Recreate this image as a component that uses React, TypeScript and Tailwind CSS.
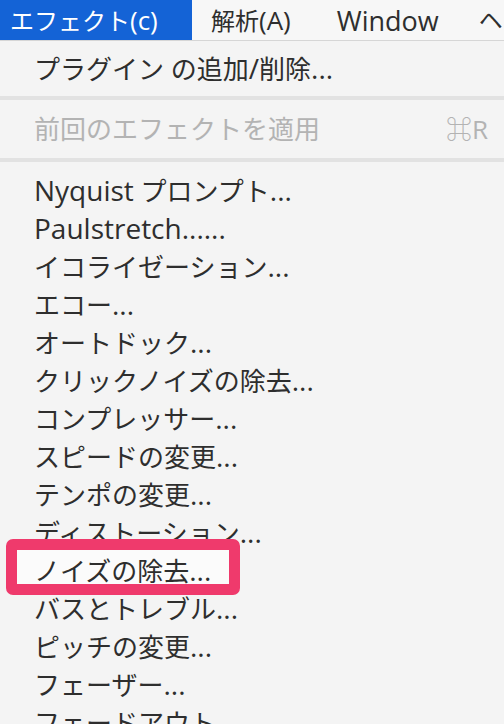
import React from 'react';

const font = { fontFamily: '"Open Sans", "Noto Sans CJK JP", sans-serif' };

const effects = [
  'Nyquist プロンプト...',
  'Paulstretch......',
  'イコライゼーション...',
  'エコー...',
  'オートドック...',
  'クリックノイズの除去...',
  'コンプレッサー...',
  'スピードの変更...',
  'テンポの変更...',
  'ディストーション...',
  'ノイズの除去...',
  'バスとトレブル...',
  'ピッチの変更...',
  'フェーザー...',
  'フェードアウト...',
];

// Latin runs render a bit larger than the kana, like the system menu font
function Label({ text, latin = 'text-[28px]' }: { text: string; latin?: string }) {
  const parts = text.split(/([A-Za-z.()/]+)/).filter(Boolean);
  return (
    <span className="relative whitespace-nowrap">
      {parts.map((p, i) =>
        /^[A-Za-z.()/]+$/.test(p) ? (
          <span key={i} className={latin}>
            {p}
          </span>
        ) : (
          <span key={i}>{p}</span>
        ),
      )}
    </span>
  );
}

function Separator() {
  return <div className="h-[4px] bg-[#e2e2e2]" />;
}

function MenuItem({ label, highlight }: { label: string; highlight?: boolean }) {
  return (
    <div className="relative flex h-[38px] shrink-0 items-center pl-[34px] text-[26px] leading-none text-[#2e2e2e]">
      {highlight && (
        <div className="absolute left-[6px] top-[-12px] h-[56px] w-[234px] rounded-[7px] border-[11px] border-[#ef3a6c] bg-[#fbfbfb]" />
      )}
      <Label text={label} />
    </div>
  );
}

export default function App() {
  return (
    <div className="flex h-[724px] w-[504px] flex-col overflow-hidden bg-[#f4f4f4]" style={font}>
      <div className="flex h-[41px] shrink-0 items-center overflow-hidden border-b border-[#d6d6d6] bg-[#f7f7f7] text-[24px] leading-none text-[#2e2e2e]">
        <div className="flex h-full w-[192px] shrink-0 items-center bg-[#1463d6] pl-[10px] text-white">
          <Label text="エフェクト(c)" latin="text-[26px]" />
        </div>
        <div className="shrink-0 pl-[19px]">
          <Label text="解析(A)" latin="text-[26px]" />
        </div>
        <div className="shrink-0 pl-[46px]">
          <Label text="Window" latin="text-[27px]" />
        </div>
        <div className="shrink-0 pl-[40px]">ヘ</div>
      </div>

      <div className="flex flex-col pt-[8px]">
        <MenuItem label="プラグイン の追加/削除..." />
        <div className="h-[9px]" />
        <Separator />
        <div className="flex h-[58px] items-center justify-between pl-[34px] pr-[16px] text-[26px] leading-none text-[#b3b3b3]">
          <Label text="前回のエフェクトを適用" />
          <span>⌘R</span>
        </div>
        <Separator />
        <div className="h-[9px]" />
        {effects.map((e) => (
          <MenuItem key={e} label={e} highlight={e === 'ノイズの除去...'} />
        ))}
      </div>
    </div>
  );
}
